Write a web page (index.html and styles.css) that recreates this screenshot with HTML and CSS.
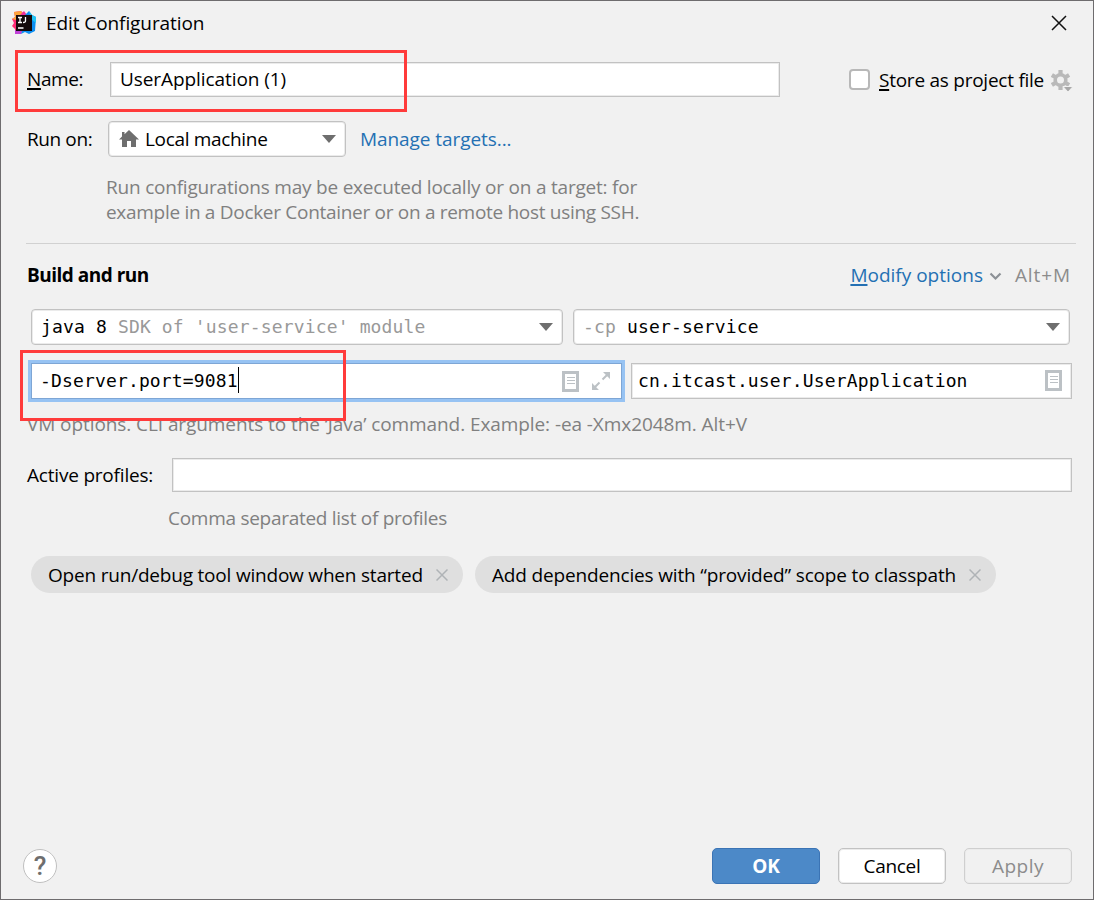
FILE: index.html
```html
<!DOCTYPE html>
<html lang="en">
<head>
    <meta charset="UTF-8">
    <title>Edit Configuration</title>
    <link rel="stylesheet" href="styles.css">
</head>
<body>
    <div class="dialog">
        <div class="title-bar">
            <svg class="logo" width="24" height="24" viewBox="0 0 24 24">
                <path d="M2 1 L9 0 L13 4 L11 20 L8 23 L3 23 L3 18 L0 15 L2 12 L0 8 L3 6 Z" fill="#fe2d75"/>
                <path d="M2 1 L9 0 L12 4 L4 9 L0 8 L3 6 Z" fill="#fda53b"/>
                <path d="M9 3 L12 0 L15 4 L15 6 L6 6 Z" fill="#f0319a"/>
                <path d="M13 4 L17 0 L20 4 L24 6 L23 20 L17 23 L13 21 L9 23 L10 18 Z" fill="#0d8ff2"/>
                <path d="M17 0 L20 4 L24 6 L24 12 L19 8 Z" fill="#20c4f5"/>
                <path d="M3 19 L10 19 L9 23 L3 23 Z" fill="#c042d8"/>
                <rect x="4" y="4" width="16" height="16" fill="#140a0c"/>
                <path d="M6 6.500h4M8 6.500v5M6 11.500h4M13.500 6v4q0 1.500-2.500 1.500M6 17h5.500" fill="none" stroke="#fff" stroke-width="1.300"/>
            </svg>
            <span class="title">Edit Configuration</span>
            <svg class="close" width="16" height="16" viewBox="0 0 16 16"><path d="M1 1L15 15M15 1L1 15" stroke="#111" stroke-width="1.500"/></svg>
        </div>

        <div class="name-row">
            <label class="name-label"><u>N</u>ame:</label>
            <div class="field name-field"><span class="name-value">UserApplication (1)</span></div>
            <div class="checkbox"></div>
            <span class="store"><u>S</u>tore as project file</span>
            <svg class="gear" width="22" height="24" viewBox="0 0 22 24">
                <circle cx="9.500" cy="10" r="5.300" fill="none" stroke="#b9b9b9" stroke-width="3.600"/>
                <path d="M9.500 0v4M9.500 16v4M.9 5l3.400 2M14.700 13l3.400 2M.9 15l3.400-2M14.700 7l3.400-2" stroke="#b9b9b9" stroke-width="4.200"/>
                <path d="M12 16.500h10l-5 5.500z" fill="#a8a8a8" stroke="#f1f1f1" stroke-width="1"/>
            </svg>
        </div>

        <div class="target-row">
            <label class="run-label">Run on:</label>
            <div class="combo target-combo">
                <svg width="20" height="18" viewBox="0 0 20 18"><path d="M10 0L20 9.500H17V17H12V11H8V17H3V9.500H0L3 6.600V2H5.500V4.200Z" fill="#6e6e6e"/></svg>
                <span class="local">Local machine</span>
                <i class="arrow"></i>
            </div>
            <a class="manage">Manage targets...</a>
        </div>
        <div class="hint target-hint">
            <div class="hint-first">Run configurations may be executed locally or on a target: for</div>
            <div class="hint-second">example in a Docker Container or on a remote host using SSH.</div>
        </div>

        <div class="separator"></div>

        <div class="section-head">
            <span class="heading">Build and run</span>
            <a class="modify"><u>M</u>odify options</a>
            <svg class="chevron" width="13" height="9" viewBox="0 0 13 9"><path d="M1.500 1.500L6.500 6.500L11.500 1.500" fill="none" stroke="#8c9196" stroke-width="2.200"/></svg>
            <span class="shortcut">Alt+M</span>
        </div>

        <div class="combo-row">
            <div class="combo mono jdk"><span>java 8 <em>SDK of 'user-service' module</em></span><i class="arrow"></i></div>
            <div class="combo mono classpath"><span><em>-cp</em> user-service</span><i class="arrow"></i></div>
        </div>

        <div class="field-row">
            <div class="field mono vm-options">
                <span>-Dserver.port=9081</span><i class="caret"></i>
                <svg class="doc" width="17" height="21" viewBox="0 0 17 21"><rect x="1.500" y="1.500" width="14" height="18" fill="#fff" stroke="#bcc1c5" stroke-width="3"/><path d="M5 6.500h8M5 9.500h8M5 12.500h8" stroke="#bcc1c5" stroke-width="1.200"/></svg>
                <svg class="expand" width="18" height="18" viewBox="0 0 18 18"><path d="M11 0H18V7ZM0 11V18H7Z" fill="#bcc1c5"/><path d="M16 2L10.500 7.500M2 16L7.500 10.500" stroke="#bcc1c5" stroke-width="2"/></svg>
            </div>
            <div class="field mono main-class">
                <span>cn.itcast.user.UserApplication</span>
                <svg class="doc" width="17" height="21" viewBox="0 0 17 21"><rect x="1.500" y="1.500" width="14" height="18" fill="#fff" stroke="#bcc1c5" stroke-width="3"/><path d="M5 6.500h8M5 9.500h8M5 12.500h8" stroke="#bcc1c5" stroke-width="1.200"/></svg>
            </div>
        </div>
        <div class="hint vm-hint">VM options. CLI arguments to the ‘Java’ command. Example: -ea -Xmx2048m. Alt+V</div>

        <div class="profiles-row">
            <label class="profiles-label">Active profiles:</label>
            <div class="field profiles-field"></div>
        </div>
        <div class="hint profiles-hint">Comma separated list of profiles</div>

        <div class="tags">
            <div class="tag"><span>Open run/debug tool window when started</span><svg width="12" height="12" viewBox="0 0 12 12"><path d="M.5 .5L11.500 11.500M11.500 .5L.5 11.500" stroke="#afb3b6" stroke-width="1.500"/></svg></div>
            <div class="tag"><span>Add dependencies with “provided” scope to classpath</span><svg width="12" height="12" viewBox="0 0 12 12"><path d="M.5 .5L11.500 11.500M11.500 .5L.5 11.500" stroke="#afb3b6" stroke-width="1.500"/></svg></div>
        </div>

        <div class="footer">
            <div class="help">?</div>
            <button class="btn primary">OK</button>
            <button class="btn cancel">Cancel</button>
            <button class="btn disabled">Apply</button>
        </div>

        <div class="mark mark-name"></div>
        <div class="mark mark-vm"></div>
    </div>
</body>
</html>
```
FILE: styles.css
```css
* {
    box-sizing: border-box;
}

body {
    margin: 0;
    font-family: "Open Sans", "Noto Sans", sans-serif;
    font-size: 19px;
    line-height: 25px;
    color: #000;
}

.dialog {
    position: relative;
    display: flex;
    flex-direction: column;
    width: 1094px;
    height: 900px;
    background-color: #f1f1f1;
    border: 1px solid #6e6c6e;
    overflow: hidden;
    white-space: nowrap;
}

u {
    text-decoration-thickness: 2px;
    text-underline-offset: 2px;
}

em {
    font-style: normal;
    color: #999;
}

a {
    color: #2470b3;
}

svg {
    flex: none;
    display: block;
}

/* Title bar */
.title-bar {
    display: flex;
    align-items: center;
    height: 44px;
    padding: 0 26px 0 11px;
}

.title {
    margin-left: 10px;
    letter-spacing: -0.08px;
}

.close {
    margin-left: auto;
}

/* Fields and combo boxes */
.field,
.combo {
    display: flex;
    align-items: center;
    height: 36px;
    background-color: #fff;
    border: 1px solid #c2c2c2;
    box-shadow: inset 0 0 0 1px #ebebeb;
}

.combo {
    border-radius: 4px;
}

.arrow {
    margin-left: auto;
    border: 7px solid transparent;
    border-top: 8px solid #6e6e6e;
    border-bottom: 0;
}

.mono {
    font-family: "DejaVu Sans Mono", monospace;
    font-size: 18px;
    letter-spacing: 0.15px;
}

.mono span {
    margin-bottom: 2px;
}

.hint {
    color: #808080;
}

/* Name */
.name-row {
    display: flex;
    align-items: center;
    height: 35px;
    margin-top: 17px;
    padding-left: 26px;
}

.name-label {
    width: 83px;
    letter-spacing: -0.4px;
}

.name-field {
    width: 670px;
    height: 35px;
    padding-left: 9px;
}

.name-value {
    letter-spacing: -0.08px;
}

.checkbox {
    width: 21px;
    height: 21px;
    margin-left: 69px;
    background-color: #fff;
    border: 2px solid #b8b8b8;
    border-radius: 4px;
}

.store {
    width: 172px;
    margin: 1px 0 0 9px;
    letter-spacing: -0.25px;
}

.gear {
    margin-top: 5px;
}

/* Run target */
.target-row {
    display: flex;
    align-items: center;
    margin-top: 24px;
    padding-left: 26px;
}

.run-label {
    width: 81px;
    letter-spacing: -0.4px;
}

.target-combo {
    width: 238px;
    padding: 0 9px 0 10px;
}

.local {
    margin-left: 6px;
    letter-spacing: -0.33px;
}

.manage {
    margin-left: 14px;
    letter-spacing: -0.07px;
}

.target-hint {
    margin: 18px 0 0 105px;
}

.hint-first {
    letter-spacing: -0.21px;
}

.hint-second {
    letter-spacing: -0.3px;
}

.separator {
    height: 1px;
    margin: 18px 17px 0 25px;
    background-color: #d1d1d1;
}

/* Build and run */
.section-head {
    display: flex;
    align-items: center;
    height: 25px;
    margin-top: 19px;
    padding: 0 22px 0 26px;
}

.heading {
    font-weight: 700;
    letter-spacing: -0.5px;
}

.modify {
    margin-left: auto;
}

.chevron {
    margin: 2px 13px 0 6px;
}

.shortcut {
    color: #8c8c8c;
    letter-spacing: 0.9px;
}

.combo-row {
    display: flex;
    gap: 10px;
    margin-top: 21px;
    padding-left: 30px;
}

.jdk,
.classpath {
    padding: 0 9px;
}

.jdk {
    width: 532px;
}

.classpath {
    width: 497px;
}

.field-row {
    display: flex;
    gap: 9px;
    margin-top: 18px;
    padding-left: 30px;
}

.vm-options {
    width: 591px;
    padding: 0 11px 0 8px;
    border-color: #7ea6d5;
    box-shadow: 0 0 0 3px #97c3f3;
}

.caret {
    width: 1px;
    height: 26px;
    margin-bottom: 2px;
    background-color: #000;
}

.doc {
    margin-left: auto;
}

.expand {
    margin-left: 13px;
}

.main-class {
    width: 441px;
    padding: 0 9px 0 6px;
}

.main-class .doc {
    margin-bottom: 2px;
}

.vm-hint {
    margin: 13px 0 0 26px;
    letter-spacing: -0.08px;
}

/* Profiles */
.profiles-row {
    display: flex;
    align-items: center;
    margin-top: 21px;
    padding-left: 26px;
}

.profiles-label {
    width: 145px;
    letter-spacing: -0.2px;
}

.profiles-field {
    width: 900px;
    height: 34px;
}

.profiles-hint {
    margin: 14px 0 0 167px;
    letter-spacing: -0.28px;
}

.tags {
    display: flex;
    gap: 12px;
    margin-top: 25px;
    padding-left: 30px;
}

.tag {
    display: flex;
    align-items: center;
    justify-content: space-between;
    height: 37px;
    padding: 1px 15px 0 17px;
    width: 432px;
    background-color: #dfdfdf;
    border-radius: 19px;
    letter-spacing: -0.2px;
}

.tag + .tag {
    width: 521px;
    letter-spacing: -0.16px;
}

/* Footer */
.footer {
    display: flex;
    align-items: center;
    gap: 18px;
    margin-top: auto;
    padding: 0 21px 15px 22px;
}

.help {
    width: 34px;
    height: 34px;
    margin-right: auto;
    border: 1px solid #c0c0c0;
    border-radius: 50%;
    background-color: #fff;
    color: #6e6e6e;
    font-family: Roboto, sans-serif;
    font-size: 26px;
    font-weight: 500;
    line-height: 33px;
    text-align: center;
}

.btn {
    width: 108px;
    height: 36px;
    padding: 0;
    border: 1px solid #c2c2c2;
    border-radius: 5px;
    background-color: #fff;
    box-shadow: inset 0 0 0 1px #ebebeb;
    font: inherit;
}

.primary {
    border-color: #3b74b5;
    background-color: #4c89c8;
    box-shadow: none;
    color: #fff;
    font-weight: 700;
}

.cancel {
    letter-spacing: -0.3px;
}

.disabled {
    border-color: #cfcfcf;
    background-color: #f1f1f1;
    color: #8c8c8c;
    letter-spacing: 0.5px;
}

/* Red highlight frames drawn over the form */
.mark {
    position: absolute;
    border: 3px solid #ff3b3b;
}

.mark-name {
    left: 14px;
    top: 49px;
    width: 392px;
    height: 62px;
}

.mark-vm {
    left: 19px;
    top: 349px;
    width: 326px;
    height: 71px;
}
```
